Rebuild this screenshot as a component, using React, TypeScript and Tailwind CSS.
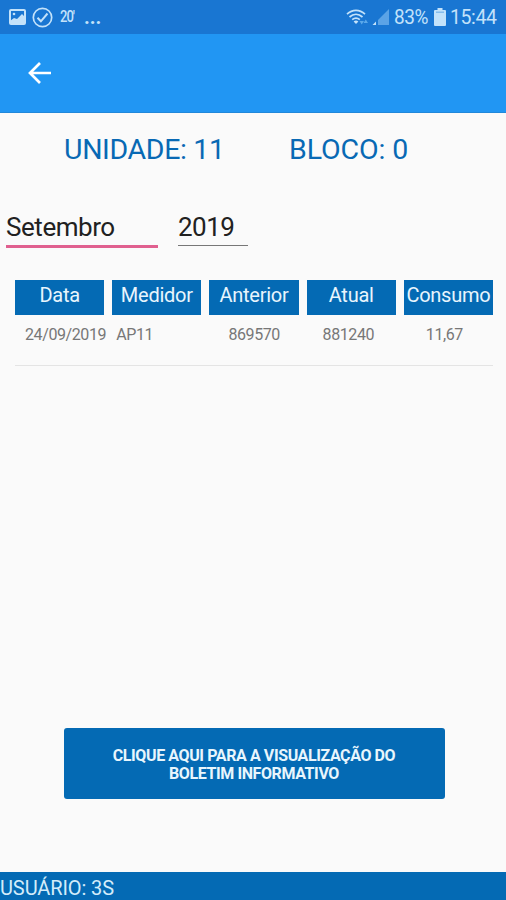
const columns = [
  { title: 'Data', value: '24/09/2019', cell: 'pl-[10px]' },
  { title: 'Medidor', value: 'AP11', cell: 'pl-[4px]' },
  { title: 'Anterior', value: '869570', cell: 'pl-[19px]' },
  { title: 'Atual', value: '881240', cell: 'pl-[16px]' },
  { title: 'Consumo', value: '11,67', cell: 'pl-[22px]' },
];

function StatusBar() {
  return (
    <div className="flex h-[34px] shrink-0 items-center bg-[#1976d2] pl-[9px] pr-[9px] text-[#c3e2fa]">
      <svg className="h-[16px] w-[17px]" viewBox="0 0 17 16" fill="none">
        <rect x="1" y="1" width="15" height="14" rx="1" stroke="currentColor" strokeWidth="2" />
        <circle cx="5" cy="5" r="1.3" fill="currentColor" />
        <path d="M1 12l4-3 3 1 5-5 3 3v7H1z" fill="currentColor" />
      </svg>
      <svg className="ml-[6px] h-[21px] w-[21px]" viewBox="0 0 21 21" fill="none" stroke="currentColor">
        <circle cx="10.5" cy="10.5" r="9.2" strokeWidth="1.7" />
        <path d="M5.5 10.7l3.4 3.6 6.6-7.8" strokeWidth="2" />
      </svg>
      <span className="ml-[7px] w-[15px] origin-center scale-y-[1.25] whitespace-nowrap text-[13px] font-medium leading-4 tracking-[-1px]">20&#39;</span>
      <span className="ml-[9px] w-[18px] whitespace-nowrap text-[20px] font-bold leading-5">...</span>
      <div className="flex-1" />
      <svg className="h-[18px] w-[24px]" viewBox="0 0 24 18" fill="none" stroke="currentColor">
        <path d="M1 6.2c5.4-5 12.600-5 18 0M3.500 9c4-3.600 9-3.600 13 0M6.200 11.700c2.400-2 5.200-2 7.600 0" strokeWidth="1.7" />
        <path d="M7.600 13.400c1.600-1.200 3.200-1.200 4.800 0L10 16z" fill="currentColor" stroke="none" />
        <path d="M13.500 13h4.500L15.700 16.500zM17.500 15h4.500L19.800 11.500z" fill="#5aa8ea" stroke="none" />
      </svg>
      <svg className="ml-[2px] h-[18px] w-[18px]" viewBox="0 0 18 18">
        <path d="M17 1v16H6V12z" fill="#5ba3e6" />
        <path d="M4 13.500V17H.5z" fill="currentColor" />
      </svg>
      <span className="ml-[4px] mt-px w-[35px] origin-center scale-y-[1.08] whitespace-nowrap text-[19px] leading-6 tracking-[-0.4px]">83%</span>
      <svg className="ml-[5px] h-[18px] w-[12px]" viewBox="0 0 12 18" fill="currentColor">
        <path d="M3.500 0h5v2H11a1 1 0 011 1v14a1 1 0 01-1 1H1a1 1 0 01-1-1V3a1 1 0 011-1h2.500z" />
        <path d="M2 3.500h8v1.500H2z" fill="#85bdec" />
      </svg>
      <span className="ml-[4px] mt-px w-[47px] origin-center scale-y-[1.08] whitespace-nowrap text-[19.500px] leading-6 tracking-[-0.400px]">15:44</span>
    </div>
  );
}

export default function App() {
  return (
    <div className="flex h-[900px] w-[506px] flex-col overflow-hidden bg-[#fafafa] font-['Roboto',sans-serif]">
      <StatusBar />
      <header className="flex h-[79px] shrink-0 items-center border-b border-[#2188da] bg-[#2196f3] pl-[28px]">
        <button aria-label="Voltar" className="text-white">
          <svg className="block h-[22px] w-[23px]" viewBox="0 0 23 22" fill="none" stroke="currentColor" strokeWidth="2.700">
            <path d="M23 11H2M12 1L2 11l10 10" />
          </svg>
        </button>
      </header>

      <main className="flex flex-1 flex-col">
        <div className="flex pl-[64px] pt-[19px] text-[28.500px] leading-[36px] text-[#0869b4]">
          <span className="w-[225px] whitespace-nowrap tracking-[-0.350px]">UNIDADE: 11</span>
          <span className="whitespace-nowrap tracking-[-0.100px]">BLOCO: 0</span>
        </div>

        <div className="mt-[40px] flex items-start gap-[20px] pl-[6px] text-[26px] leading-[38px] text-[#212121]">
          <div className="h-[40px] w-[152px] border-b-[3px] border-[#e0608f] tracking-[-0.450px]">Setembro</div>
          <div className="h-[38px] w-[70px] border-b border-[#777777] tracking-[-0.500px]">2019</div>
        </div>

        <div className="ml-[15px] mr-[13px] mt-[32px] border-b border-[#e4e4e4]">
          <div className="grid grid-cols-5 gap-x-[8px]">
            {columns.map((c) => (
              <div key={c.title} className="flex h-[35px] justify-center whitespace-nowrap bg-[#046ab4] pt-[2px] text-[20px] leading-[26px] tracking-[-0.250px] text-[#e8f5fd]">
                {c.title}
              </div>
            ))}
          </div>
          <div className="grid h-[50px] grid-cols-5 gap-x-[8px] pt-[9px] text-[16px] leading-[21px] tracking-[-0.400px] text-[#777777]">
            {columns.map((c) => (
              <div key={c.title} className={'whitespace-nowrap ' + c.cell}>{c.value}</div>
            ))}
          </div>
        </div>

        <button className="mx-auto mb-[73px] mt-auto h-[71px] w-[381px] translate-x-[1px] rounded-[3px] bg-[#046ab4] pt-[2px] text-center text-[16px] font-bold leading-[18px] tracking-[-0.400px] text-[#e8f6fd]">
          CLIQUE AQUI PARA A VISUALIZAÇÃO DO
          <br />
          BOLETIM INFORMATIVO
        </button>
      </main>

      <footer className="h-[28px] shrink-0 whitespace-nowrap bg-[#046ab4] pt-[3px] text-[20px] leading-[26px] tracking-[-0.100px] text-[#d3ecfa]">
        USUÁRIO: 3S
      </footer>
    </div>
  );
}
